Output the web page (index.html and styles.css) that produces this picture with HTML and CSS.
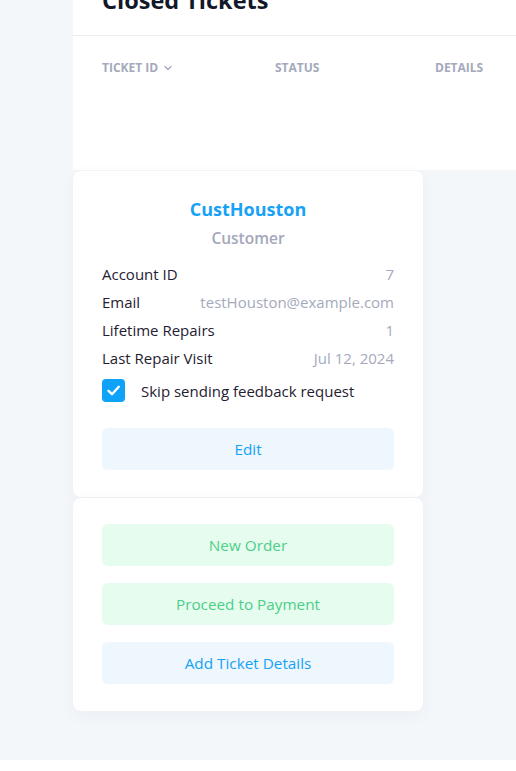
FILE: index.html
```html
<!DOCTYPE html>
<html lang="en">
<head>
  <meta charset="UTF-8">
  <meta name="viewport" content="width=device-width, initial-scale=1.0">
  <title>Customer</title>
  <link rel="stylesheet" href="styles.css">
</head>
<body>
  <div class="page">

    <!-- Closed tickets table -->
    <div class="tickets">
      <h2 class="tickets-title">Closed Tickets</h2>
      <div class="tickets-head">
        <span class="col sortable">TICKET ID
          <svg width="10" height="10" viewBox="0 0 10 10"><path d="M2 3.5 L5 6.5 L8 3.5" fill="none" stroke="#a4a9bc" stroke-width="1.3" stroke-linecap="round" stroke-linejoin="round"/></svg>
        </span>
        <span class="col">STATUS</span>
        <span class="col">DETAILS</span>
      </div>
    </div>

    <!-- Customer profile -->
    <div class="card profile">
      <div class="profile-name">CustHouston</div>
      <div class="profile-role">Customer</div>
      <div class="info">
        <div class="info-row"><span>Account ID</span><span class="value">7</span></div>
        <div class="info-row"><span>Email</span><span class="value">testHouston@example.com</span></div>
        <div class="info-row"><span>Lifetime Repairs</span><span class="value">1</span></div>
        <div class="info-row"><span>Last Repair Visit</span><span class="value">Jul 12, 2024</span></div>
      </div>
      <label class="check">
        <span class="check-box">
          <svg width="17" height="17" viewBox="0 0 17 17"><path d="M3.5 8.8 L7 12.2 L13.8 4.8" fill="none" stroke="#fff" stroke-width="2.4" stroke-linecap="round" stroke-linejoin="round"/></svg>
        </span>
        Skip sending feedback request
      </label>
      <button class="btn btn-blue">Edit</button>
    </div>

    <!-- Actions -->
    <div class="card actions">
      <button class="btn btn-green">New Order</button>
      <button class="btn btn-green">Proceed to Payment</button>
      <button class="btn btn-blue">Add Ticket Details</button>
    </div>

  </div>
</body>
</html>
```

FILE: styles.css
```css
/* Overall */
body {
  margin: 0;
  background-color: #fff;
  font-family: 'Open Sans', 'Noto Sans', sans-serif;
  color: #1f2131;
}

.page {
  min-height: 760px;
  background-color: #f3f7fa;
  padding-left: 73px;
  box-sizing: border-box;
  overflow: hidden;
}

/* Tickets table */
.tickets {
  background-color: #fff;
  margin-top: -30px;
  height: 200px;
}

.tickets-title {
  margin: 0;
  padding: 0 29px;
  height: 66px;
  line-height: 60px;
  font-size: 23.5px;
  font-weight: 700;
  color: #121829;
  border-bottom: 1px solid #e9eef3;
  box-sizing: border-box;
}

.tickets-head {
  display: grid;
  grid-template-columns: 173px 160px auto;
  padding: 23px 29px 0;
  font-size: 12px;
  font-weight: 700;
  color: #a4a9bc;
}

.sortable {
  display: flex;
  align-items: center;
  gap: 5px;
}

/* Cards */
.card {
  width: 350px;
  background-color: #fff;
  border-radius: 8px;
  box-shadow: 0 4px 18px rgba(40, 60, 90, 0.04);
  box-sizing: border-box;
  margin-top: 1px;
}

.profile {
  padding: 26px 29px 27px;
}

.profile-name {
  text-align: center;
  font-size: 18px;
  font-weight: 700;
  line-height: 24px;
  color: #17a2f5;
}

.profile-role {
  text-align: center;
  margin-top: 6px;
  font-size: 15.5px;
  font-weight: 600;
  line-height: 22px;
  color: #a3a8ba;
}

.info {
  margin-top: 11px;
}

.info-row {
  display: flex;
  justify-content: space-between;
  height: 28px;
  line-height: 28px;
  font-size: 15px;
}

.value {
  color: #a5a9bc;
}

.check {
  display: flex;
  align-items: center;
  gap: 16px;
  margin-top: 7px;
  height: 23px;
  font-size: 15px;
}

.check-box {
  width: 23px;
  height: 23px;
  border-radius: 4px;
  background-color: #0ea3f8;
  display: flex;
  align-items: center;
  justify-content: center;
}

/* Buttons */
.btn {
  display: block;
  width: 100%;
  height: 42px;
  border: none;
  border-radius: 6px;
  font-family: inherit;
  font-size: 15.3px;
  font-weight: 500;
  cursor: pointer;
}

.btn-blue {
  background-color: #eef7fe;
  color: #17a2f5;
}

.btn-green {
  background-color: #e6fcef;
  color: #4ccf89;
}

.profile .btn {
  margin-top: 26px;
}

.actions {
  padding: 26px 29px 27px;
  display: flex;
  flex-direction: column;
  gap: 17px;
}
```
